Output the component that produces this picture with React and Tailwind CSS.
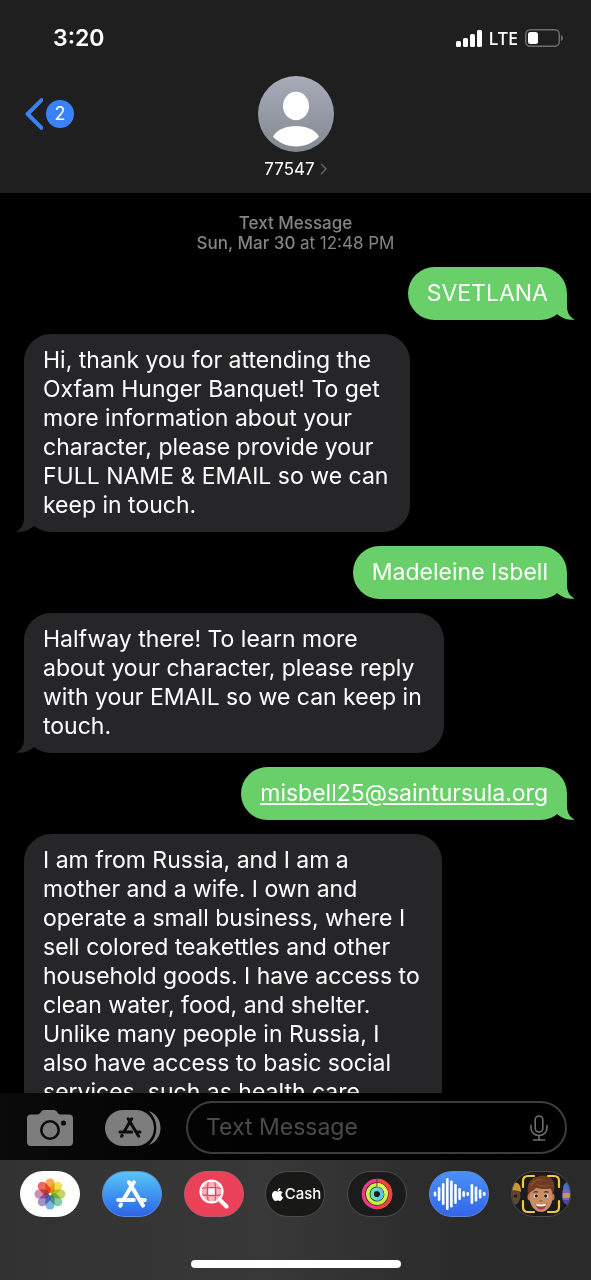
import { useState } from 'react';
import { FaApple } from 'react-icons/fa';

const MESSAGES = [
  { id: 1, mine: true, text: 'SVETLANA' },
  {
    id: 2,
    text: 'Hi, thank you for attending the\nOxfam Hunger Banquet! To get\nmore information about your\ncharacter, please provide your\nFULL NAME & EMAIL so we can\nkeep in touch.',
  },
  { id: 3, mine: true, text: 'Madeleine Isbell' },
  {
    id: 4,
    text: 'Halfway there! To learn more\nabout your character, please reply\nwith your EMAIL so we can keep in\ntouch.',
  },
  { id: 5, mine: true, text: 'misbell25@saintursula.org', email: true },
  {
    id: 6,
    text: 'I am from Russia, and I am a\nmother and a wife. I own and\noperate a small business, where I\nsell colored teakettles and other\nhousehold goods. I have access to\nclean water, food, and shelter.\nUnlike many people in Russia, I\nalso have access to basic social\nservices, such as health care',
  },
];

const PETALS = ['#f7a13a', '#efe03c', '#b9d455', '#7fc79b', '#6aaee0', '#9a86c6', '#cf7fa8', '#ea5a4c'];

const WAVE = [5, 14, 22, 32, 27, 20, 12, 6, 4, 20, 15, 9, 4];

function StatusBar() {
  return (
    <div className="flex h-[76px] items-center justify-between pl-[53px] pr-7">
      <span className="text-[23px] font-semibold leading-7">3:20</span>
      <div className="flex items-center gap-[7px]">
        <svg className="h-[17px] w-[26px]" viewBox="0 0 26 17" fill="#fff">
          <rect x="0" y="11" width="5" height="6" rx="1.5" />
          <rect x="7" y="8" width="5" height="9" rx="1.5" />
          <rect x="14" y="4" width="5" height="13" rx="1.5" />
          <rect x="21" y="0" width="5" height="17" rx="1.5" />
        </svg>
        <span className="font-['Noto_Sans',sans-serif] text-[18px] font-medium leading-6">LTE</span>
        <svg className="h-[18px] w-[38px]" viewBox="0 0 38 18">
          <rect x="0.75" y="0.75" width="33.5" height="16.5" rx="4.5" fill="none" stroke="#6e6e6e" strokeWidth="1.5" />
          <rect x="3" y="3" width="10" height="12" rx="2.5" fill="#fff" />
          <path d="M36 6c2.6 1 2.6 5 0 6z" fill="#6e6e6e" />
        </svg>
      </div>
    </div>
  );
}

function ChatHeader() {
  return (
    <header className="shrink-0 bg-[#1f1f1f] text-white">
      <StatusBar />
      <div className="grid grid-cols-3 items-start pb-[14px]">
        <button type="button" aria-label="Back, 2 unread" className="flex h-[76px] items-center gap-[3px] pl-[25px]">
          <svg className="h-8 w-[18px]" viewBox="0 0 18 32" fill="none" stroke="#3a82f7" strokeWidth="4" strokeLinecap="round" strokeLinejoin="round">
            <path d="M16.5 2.2 2.6 16l13.9 13.8" />
          </svg>
          <span className="flex size-7 items-center justify-center rounded-full bg-[#3a82f7] text-[18px] leading-6">2</span>
        </button>
        <button type="button" className="flex flex-col items-center gap-[7px]">
          <svg className="size-[76px]" viewBox="0 0 76 76">
            <defs>
              <linearGradient id="avatar" x1="0" y1="0" x2="0" y2="1">
                <stop offset="0" stopColor="#a8acb9" />
                <stop offset="1" stopColor="#848892" />
              </linearGradient>
            </defs>
            <circle cx="38" cy="38" r="38" fill="url(#avatar)" />
            <ellipse cx="38" cy="30" rx="13" ry="14.2" fill="#fff" />
            <path d="M15 60.500C19 53.500 28 50 38 50s19 3.500 23 10.500C56 66.500 47 70.500 38 70.500S20 66.500 15 60.500z" fill="#fff" />
          </svg>
          <span className="flex items-center gap-[5px] text-[17px] leading-5">
            77547
            <svg className="h-3 w-[7px]" viewBox="0 0 7 12" fill="none" stroke="#636366" strokeWidth="1.5">
              <path d="M1 .7 6 6l-5 5.300" />
            </svg>
          </span>
        </button>
      </div>
    </header>
  );
}

function Bubble({ message }) {
  const { mine, text, email } = message;
  return (
    <li
      className={
        mine
          ? 'relative w-fit self-end rounded-[27px] bg-[#69cf69] px-[19px] py-3'
          : 'relative w-fit self-start rounded-[27px] bg-[#262628] py-3 pl-[19px] pr-[22px]'
      }
    >
      <svg
        className={mine ? 'absolute -right-2 bottom-0 h-[27px] w-6' : 'absolute -left-2 bottom-0 h-[27px] w-6 -scale-x-100'}
        viewBox="0 0 24 27"
        fill={mine ? '#69cf69' : '#262628'}
      >
        <path d="M16 0v13c0 7 3 11.500 8 13.500-6 1-12-.5-17.500-5L0 10V0z" />
      </svg>
      <p className="relative whitespace-pre-line">
        {email ? (
          <a href={`mailto:${text}`} className="underline decoration-2 underline-offset-2">
            {text}
          </a>
        ) : (
          text
        )}
      </p>
    </li>
  );
}

function StoreGlyph({ className }) {
  return (
    <svg className={className} viewBox="0 0 31 28" fill="none" stroke="currentColor" strokeWidth="4" strokeLinecap="round">
      <path d="M17.800 2.300 8.500 18M13 2.300l14 23.300M2.200 20h15.600M24.500 20h4.300M5 24.500l-.7 1.200" />
    </svg>
  );
}

function Composer() {
  const [draft, setDraft] = useState('');

  return (
    <div className="flex shrink-0 items-center bg-linear-to-r from-[#0b0b0b] to-black pb-[6px] pl-[27px] pr-6 pt-2">
      <button type="button" aria-label="Camera" className="shrink-0">
        <svg className="h-9 w-[46px]" viewBox="0 0 46 36">
          <path
            d="M4 4.500h6c1.500 0 2.500-.6 3.500-2S15.500 0 17 0h10c1.500 0 2.500 1 3.500 2.500s2 2 3.500 2h8a4 4 0 0 1 4 4V32a4 4 0 0 1-4 4H4a4 4 0 0 1-4-4V8.500a4 4 0 0 1 4-4z"
            fill="#7d7d7d"
          />
          <circle cx="23" cy="20" r="8.700" fill="none" stroke="#0b0b0b" strokeWidth="2.600" />
          <circle cx="36.500" cy="13" r="2.600" fill="#0b0b0b" />
        </svg>
      </button>
      <button type="button" aria-label="Apps" className="relative ml-8 flex shrink-0 items-center">
        <svg className="h-9 w-14" viewBox="0 0 56 36" fill="#7d7d7d">
          <rect width="49" height="36" rx="18" />
          <path d="M43.500 1C51 3.500 55.500 10 55.500 18S51 32.500 43.500 35C49 30.500 51.300 24.500 51.300 18S49 5.500 43.500 1z" />
        </svg>
        <StoreGlyph className="absolute left-[13px] top-[7px] h-[21px] w-6 text-[#0b0b0b]" />
      </button>
      <div className="ml-[25px] flex h-[53px] min-w-0 flex-1 items-center rounded-full border-2 border-[#3d3d3e] pl-[18px] pr-[17px]">
        <input
          type="text"
          aria-label="Text Message"
          placeholder="Text Message"
          value={draft}
          onChange={(e) => setDraft(e.target.value)}
          className="min-w-0 flex-1 bg-transparent text-white outline-none placeholder:text-[#4b4b4c]"
        />
        <button type="button" aria-label="Dictate" className="shrink-0">
          <svg className="h-[26px] w-[18px]" viewBox="0 0 18 26" fill="none" stroke="#6f6f70" strokeWidth="1.600" strokeLinecap="round">
            <rect x="5.200" y="1" width="7.600" height="16" rx="3.800" />
            <path d="M1 10.500v2.500c0 4.500 3.500 7.500 8 7.500s8-3 8-7.500v-2.500M9 20.500V25M3.500 25h11" />
          </svg>
        </button>
      </div>
    </div>
  );
}

function PhotosIcon() {
  return (
    <svg className="size-8" viewBox="-16 -16 32 32">
      {PETALS.map((color, i) => (
        <rect key={color} x="-4.600" y="-15.500" width="9.200" height="14.500" rx="4.600" fill={color} opacity="0.9" className="mix-blend-multiply" transform={`rotate(${i * 45})`} />
      ))}
    </svg>
  );
}

function ImagesIcon() {
  return (
    <svg className="size-[30px]" viewBox="0 0 30 30" fill="none" stroke="#fff">
      <circle cx="12.500" cy="12.500" r="11" fill="#f9b3bd" stroke="none" />
      <path d="M9.500 9.500h6v6h-6z" fill="#fff" stroke="none" />
      <path d="M2 9.500q10.500-2 21 0M2 15.700q10.500 2 21 0M9.300 2q-2 10.500 0 21M15.700 2q2 10.500 0 21" stroke="#ea4159" strokeWidth="1.200" />
      <circle cx="12.500" cy="12.500" r="11" strokeWidth="2.200" />
      <path d="m21 21 6.500 6.500" strokeWidth="4" strokeLinecap="round" />
    </svg>
  );
}

function RingsIcon() {
  return (
    <svg className="size-8" viewBox="-16 -16 32 32" fill="none" strokeWidth="3.600">
      <circle r="13.500" stroke="#e83a86" />
      <path d="M0-13.500a13.500 13.500 0 0 1 0 27" stroke="#f4433f" />
      <circle r="9.200" stroke="#c4f648" />
      <path d="M0-9.200a9.200 9.200 0 0 1 9.200 9.200" stroke="#e2fb52" />
      <circle r="4.900" stroke="#62e5bd" />
      <path d="M0-4.900a4.900 4.900 0 0 1 0 9.800" stroke="#5bc8ee" />
      <path d="M0-15.300v3.600M0-11v3.600" stroke="#7c2545" strokeWidth="1" />
    </svg>
  );
}

function WaveIcon() {
  return (
    <svg className="h-[34px] w-[53px]" viewBox="0 0 53 34" stroke="#fff" strokeWidth="2.600" strokeLinecap="round">
      {WAVE.map((h, i) => (
        <path key={i} d={`M${2 + i * 4.1} ${17 - h / 2 + 1.3}v${h - 2.6}`} />
      ))}
    </svg>
  );
}

function MemojiIcon() {
  return (
    <svg className="h-[44px] w-[60px] shrink-0" viewBox="0 0 60 44">
      {/* neighbouring faces, cut off by the edges */}
      <ellipse cx="3" cy="24" rx="6.500" ry="9" fill="#5d4637" />
      <path d="M-2 19c0-5 3-9 7-8.500 4 1 5 5 5 9.500-4-2-8-2-12-1z" fill="#c9992c" />
      <ellipse cx="4.500" cy="24" rx="1.800" ry="1.500" fill="#221a17" />
      <ellipse cx="57" cy="23" rx="6" ry="10" fill="#7665bd" />
      <path d="M52 15c1-4 4-6 9-5v8c-3-1-6-1-9-1z" fill="#3973b8" />
      <path d="M52 21h9v5h-9z" fill="#c09a55" />
      <path d="M52 28h8v4h-6z" fill="#563f98" />
      {/* middle face */}
      <ellipse cx="18.500" cy="25" rx="2" ry="3.500" fill="#b97854" />
      <ellipse cx="41.500" cy="25" rx="2" ry="3.500" fill="#b97854" />
      <path d="M18.500 17c0-6 5-9 11.500-9s11.500 3 11.500 9v8c0 8-5 15-11.500 15s-11.500-7-11.500-15z" fill="#c98c63" />
      <path d="M17 22.500C15.500 12 19 6 26 5c8-4 17.500 1 17.500 9 0 3-.5 6-2 8.500-.5-3-1-4.500-2-6-6 1-12 .5-14.500-1-1 3-5 3-8 7z" fill="#6f3c22" />
      <path d="M20 14c2-5 6-7 11-6M26 12.500c4 2 8 2 13 1" stroke="#8d5431" strokeWidth="1.200" fill="none" />
      <path d="M22.500 20.500c1.500-1 3-1 4.500-.3M33 20.200c1.500-.7 3-.7 4.500.3" stroke="#5c321d" strokeWidth="1.200" fill="none" />
      <ellipse cx="25" cy="24" rx="2.400" ry="1.900" fill="#fff" />
      <ellipse cx="35" cy="24" rx="2.400" ry="1.900" fill="#fff" />
      <circle cx="25.300" cy="24" r="1.700" fill="#25211c" />
      <circle cx="34.700" cy="24" r="1.700" fill="#25211c" />
      <path d="M28.500 28.500c1 .8 2 .8 3 0" stroke="#a05f3f" strokeWidth="1.200" fill="none" />
      <path d="M24.500 31.500c3 1 8 1 11 0-.5 4-3 6-5.500 6s-5-2-5.500-6z" fill="#a5413c" />
      <path d="M25 31.700c3 .9 7 .9 10 0l-.8 2.300c-3 .6-5.500.6-8.400 0z" fill="#fff" />
      <path d="M12 15V9q0-5 5-5h6M37 4h6q5 0 5 5v6M48 29v6q0 5-5 5h-6M23 40h-6q-5 0-5-5v-6" fill="none" stroke="#f2c83e" strokeWidth="2.200" strokeLinecap="round" />
    </svg>
  );
}

function CashIcon() {
  return (
    <span className="flex items-center text-[15px] font-medium leading-5">
      <FaApple className="size-[15px]" />
      Cash
    </span>
  );
}

const APPS = [
  { name: 'Photos', style: 'bg-white', icon: <PhotosIcon /> },
  { name: 'App Store', style: 'border border-[#5f8fd0] bg-linear-to-b from-[#5ac4f7] to-[#2f62e8]', icon: <StoreGlyph className="h-7 w-[31px]" /> },
  { name: '#images', style: 'border border-[#b3606e] bg-[#ec4259]', icon: <ImagesIcon /> },
  { name: 'Apple Cash', style: 'border border-[#4d4d4d] bg-[#181816]', icon: <CashIcon /> },
  { name: 'Fitness', style: 'border border-[#4d4d4d] bg-[#1b1b1b]', icon: <RingsIcon /> },
  { name: 'Audio', style: 'border border-[#6289cf] bg-linear-to-b from-[#4a90f6] to-[#3465ea]', icon: <WaveIcon /> },
  { name: 'Memoji', style: 'border border-[#4d4d4d] bg-[#1b1b1b]', icon: <MemojiIcon /> },
];

function AppStrip() {
  return (
    <nav className="flex shrink-0 flex-col items-center gap-[43px] bg-linear-to-r from-[#323232] via-[#383838] via-45% to-[#2a2a2a] to-80% px-5 pb-3 pt-[11px] text-white">
      <div className="flex w-full justify-between">
        {APPS.map((app) => (
          <button
            key={app.name}
            type="button"
            aria-label={app.name}
            className={`flex h-[46px] w-[60px] items-center justify-center overflow-hidden rounded-full ${app.style}`}
          >
            {app.icon}
          </button>
        ))}
      </div>
      <div className="h-2 w-[210px] rounded-full bg-white" />
    </nav>
  );
}

export default function App() {
  return (
    <div className="flex h-screen flex-col bg-black font-['Inter',sans-serif] text-[23px] leading-[29px]">
      <ChatHeader />
      <main className="min-h-0 flex-1 overflow-y-auto px-6 pt-5 text-white [scrollbar-width:none]">
        <p className="pb-[14px] text-center text-[17px] font-medium leading-5 text-[#858588]">
          Text Message
          <br />
          Sun, Mar 30 <span className="font-normal">at 12:48 PM</span>
        </p>
        <ul className="flex flex-col gap-[14px]">
          {MESSAGES.map((m) => (
            <Bubble key={m.id} message={m} />
          ))}
        </ul>
      </main>
      <Composer />
      <AppStrip />
    </div>
  );
}
